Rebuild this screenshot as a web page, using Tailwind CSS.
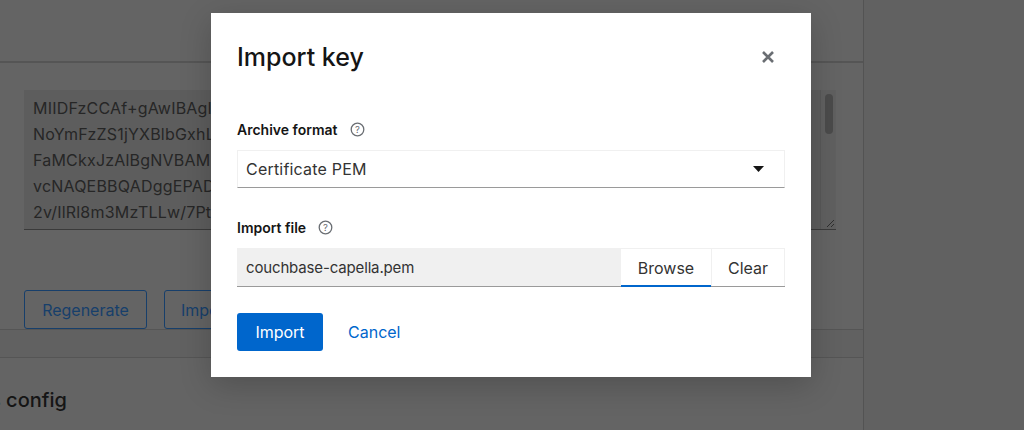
<!DOCTYPE html>
<html lang="en">
<head>
    <meta charset="UTF-8">
    <meta name="viewport" content="width=device-width, initial-scale=1.0">
    <title>Import key</title>
    <script src="https://cdn.jsdelivr.net/npm/@tailwindcss/browser@4"></script>
</head>
<body class="w-[1024px] h-[430px] overflow-hidden relative bg-[#616161] font-['Inter',sans-serif]">
    <!-- page behind the modal -->
    <div class="w-[864px] border-r border-[#535353]">
        <div class="h-[63px] bg-[#646464] border-b-2 border-[#555555]"></div>
        <div class="h-[267px] bg-[#646464] border-b border-[#555555] pt-[27px] px-6">
            <div class="relative w-[812px] h-[140px] bg-[#5d5d5d] border-b border-[#3a3a3a] pl-[9px] pt-[5px] text-[16px] leading-[26px] tracking-[0.2px] text-[#262626] overflow-hidden">
                <div>MIIDFzCCAf+gAwIBAgIUZ</div>
                <div>NoYmFzZS1jYXBlbGxhLm</div>
                <div>FaMCkxJzAlBgNVBAMMHm</div>
                <div>vcNAQEBBQADggEPADCC</div>
                <div>2v/IlRl8m3MzTLLw/7PtQa</div>
                <div class="absolute right-0 top-0 bottom-0 w-4 bg-[#606060] border-l border-[#585858]">
                    <div class="mx-auto mt-1 w-2 h-10 rounded-full bg-[#4b4b4b]"></div>
                </div>
                <svg class="absolute right-0 bottom-0" width="15" height="15" viewBox="0 0 15 15"><path d="M6 13 13 6M10 13l3-3" stroke="#2e2e2e" fill="none"/></svg>
            </div>
            <div class="flex gap-[17px] mt-[60px]">
                <div class="h-[39px] w-[123px] flex items-center justify-center border border-[#173f6b] rounded-[3px] text-[16px] text-[#173f6b]">Regenerate</div>
                <div class="h-[39px] px-4 flex items-center border border-[#173f6b] rounded-[3px] text-[16px] text-[#173f6b]">Import</div>
            </div>
        </div>
        <div class="h-[27px] bg-[#616161]"></div>
        <div class="h-[73px] bg-[#646464] border-t border-[#555555] pl-[6px] pt-[28px] text-[20px] leading-7 font-medium text-[#151515] overflow-hidden whitespace-nowrap">
            <span class="ml-[-16px]">s config</span>
        </div>
    </div>

    <!-- modal -->
    <div class="absolute left-[211px] top-[13px] w-[600px] h-[364px] bg-white px-[26px] pt-6 shadow-[0_8px_30px_rgba(0,0,0,0.2)] text-[#151515]">
        <div class="flex items-center justify-between h-10">
            <h1 class="text-[25px] leading-10 font-medium">Import key</h1>
            <svg class="mr-[10px]" width="14" height="14" viewBox="0 0 14 14"><path d="M2 2 12 12M12 2 2 12" stroke="#6a6e73" stroke-width="2.6"/></svg>
        </div>

        <div class="mt-[40px] flex items-center gap-3 h-6">
            <span class="text-[14px] font-semibold">Archive format</span>
            <svg width="15" height="15" viewBox="0 0 15 15" fill="none"><circle cx="7.5" cy="7.5" r="6.3" stroke="#6a6e73" stroke-width="1.3"/><text x="7.5" y="11" text-anchor="middle" font-size="9.5" font-family="Inter" fill="#6a6e73">?</text></svg>
        </div>
        <div class="mt-[9px] h-[38px] flex items-center justify-between pl-2 pr-5 border border-[#f0f0f0] border-b-[#9a9a9a] text-[16px] tracking-[0.2px] text-[#333]">
            <span>Certificate PEM</span>
            <svg width="11" height="6" viewBox="0 0 11 6"><path d="M0 0h11L5.5 6z" fill="#151515"/></svg>
        </div>

        <div class="mt-[27px] flex items-center gap-3 h-6">
            <span class="text-[14px] font-semibold">Import file</span>
            <svg width="15" height="15" viewBox="0 0 15 15" fill="none"><circle cx="7.5" cy="7.5" r="6.3" stroke="#6a6e73" stroke-width="1.3"/><text x="7.5" y="11" text-anchor="middle" font-size="9.5" font-family="Inter" fill="#6a6e73">?</text></svg>
        </div>
        <div class="mt-[9px] h-[39px] flex border-b border-[#9a9a9a] text-[16px] text-[#333]">
            <div class="flex-1 bg-[#f0f0f0] pl-[9px] pt-[3px] flex items-center text-[15px] tracking-[-0.15px]">couchbase-capella.pem</div>
            <div class="w-[90px] pt-[1px] flex items-center justify-center border-t border-[#f0f0f0] border-b-2 border-b-[#0066cc] mb-[-1px]">Browse</div>
            <div class="w-[74px] flex items-center justify-center border-t border-x border-[#f0f0f0]">Clear</div>
        </div>

        <div class="mt-[26px] flex items-center gap-[9px]">
            <div class="w-[86px] h-[38px] rounded-[3px] bg-[#0066cc] text-white text-[16px] flex items-center justify-center">Import</div>
            <div class="px-4 text-[#0066cc] text-[16px]">Cancel</div>
        </div>
    </div>
</body>
</html>
